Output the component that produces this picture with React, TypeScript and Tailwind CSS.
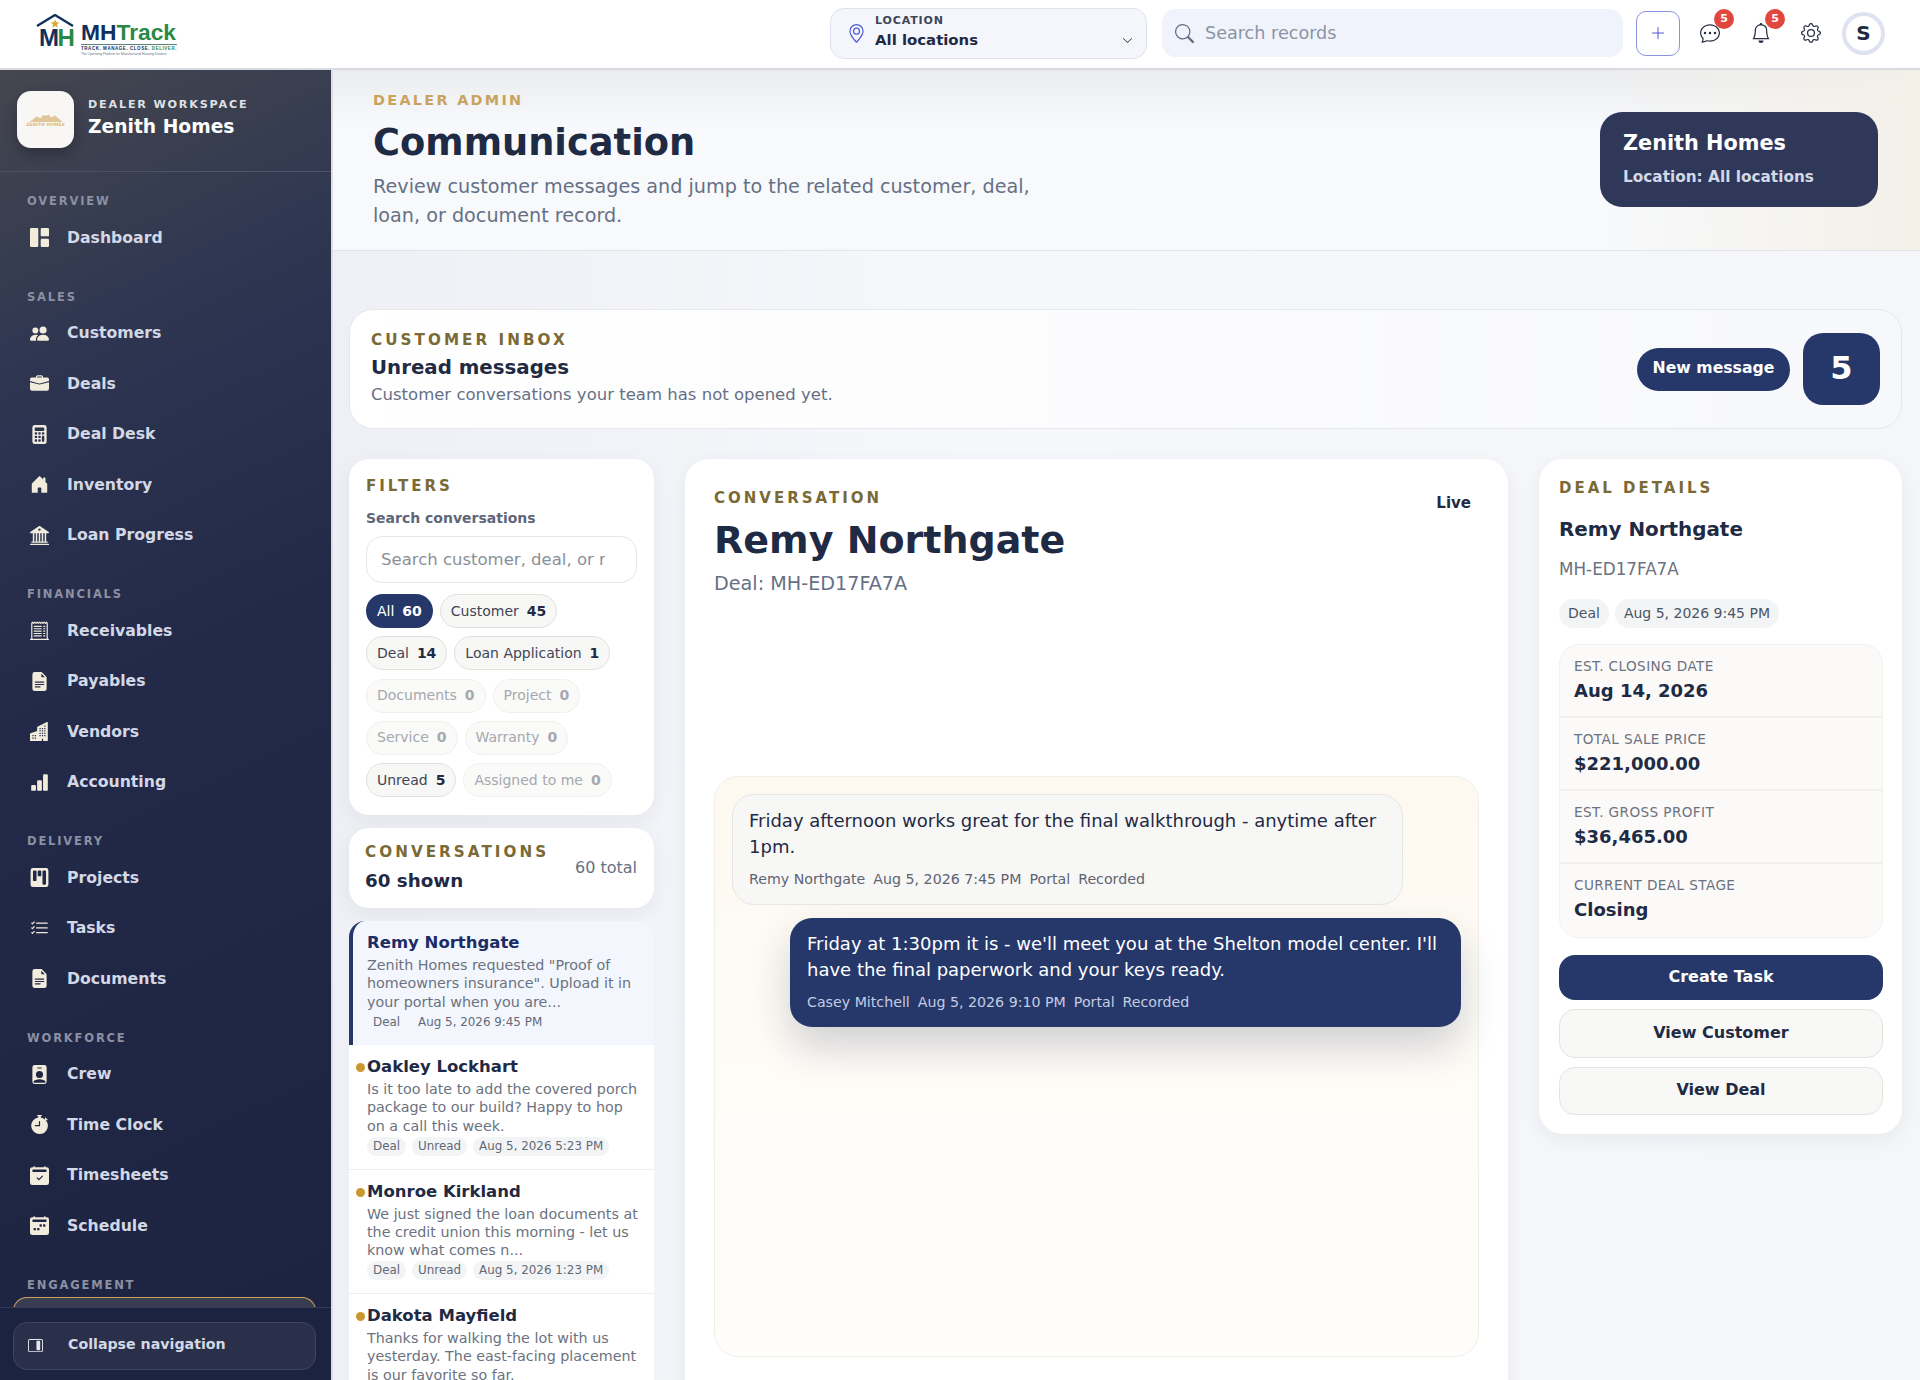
import React from "react";
import {
  BsBank2,
  BsBarChartFill,
  BsBell,
  BsBriefcaseFill,
  BsBuildingsFill,
  BsCalculatorFill,
  BsCalendar2CheckFill,
  BsCalendar2WeekFill,
  BsChatDots,
  BsChevronDown,
  BsFileEarmarkTextFill,
  BsGear,
  BsGeoAlt,
  BsGrid1X2Fill,
  BsHouseDoorFill,
  BsKanbanFill,
  BsLayoutSidebarInsetReverse,
  BsListCheck,
  BsPeopleFill,
  BsPersonBadgeFill,
  BsPlusLg,
  BsReceiptCutoff,
  BsSearch,
  BsStopwatchFill,
} from "react-icons/bs";

const navSections = [
  { title: "OVERVIEW", items: [{ label: "Dashboard", icon: BsGrid1X2Fill }] },
  {
    title: "SALES",
    items: [
      { label: "Customers", icon: BsPeopleFill },
      { label: "Deals", icon: BsBriefcaseFill },
      { label: "Deal Desk", icon: BsCalculatorFill },
      { label: "Inventory", icon: BsHouseDoorFill },
      { label: "Loan Progress", icon: BsBank2 },
    ],
  },
  {
    title: "FINANCIALS",
    items: [
      { label: "Receivables", icon: BsReceiptCutoff },
      { label: "Payables", icon: BsFileEarmarkTextFill },
      { label: "Vendors", icon: BsBuildingsFill },
      { label: "Accounting", icon: BsBarChartFill },
    ],
  },
  {
    title: "DELIVERY",
    items: [
      { label: "Projects", icon: BsKanbanFill },
      { label: "Tasks", icon: BsListCheck },
      { label: "Documents", icon: BsFileEarmarkTextFill },
    ],
  },
  {
    title: "WORKFORCE",
    items: [
      { label: "Crew", icon: BsPersonBadgeFill },
      { label: "Time Clock", icon: BsStopwatchFill },
      { label: "Timesheets", icon: BsCalendar2CheckFill },
      { label: "Schedule", icon: BsCalendar2WeekFill },
    ],
  },
];

const filterRows = [
  [
    { label: "All", count: 60, state: "active" },
    { label: "Customer", count: 45, state: "on" },
  ],
  [
    { label: "Deal", count: 14, state: "on" },
    { label: "Loan Application", count: 1, state: "on" },
  ],
  [
    { label: "Documents", count: 0, state: "off" },
    { label: "Project", count: 0, state: "off" },
  ],
  [
    { label: "Service", count: 0, state: "off" },
    { label: "Warranty", count: 0, state: "off" },
  ],
  [
    { label: "Unread", count: 5, state: "on" },
    { label: "Assigned to me", count: 0, state: "off" },
  ],
];

const threads = [
  {
    name: "Remy Northgate",
    text: 'Zenith Homes requested "Proof of homeowners insurance". Upload it in your portal when you are...',
    tags: ["Deal", "Aug 5, 2026 9:45 PM"],
    active: true,
  },
  {
    name: "Oakley Lockhart",
    text: "Is it too late to add the covered porch package to our build? Happy to hop on a call this week.",
    tags: ["Deal", "Unread", "Aug 5, 2026 5:23 PM"],
  },
  {
    name: "Monroe Kirkland",
    text: "We just signed the loan documents at the credit union this morning - let us know what comes n...",
    tags: ["Deal", "Unread", "Aug 5, 2026 1:23 PM"],
  },
  {
    name: "Dakota Mayfield",
    text: "Thanks for walking the lot with us yesterday. The east-facing placement is our favorite so far.",
    tags: ["Deal", "Unread", "Aug 5, 2026 9:23 AM"],
  },
];

const stats = [
  { label: "EST. CLOSING DATE", value: "Aug 14, 2026" },
  { label: "TOTAL SALE PRICE", value: "$221,000.00" },
  { label: "EST. GROSS PROFIT", value: "$36,465.00" },
  { label: "CURRENT DEAL STAGE", value: "Closing" },
];

const Logo = () => (
  <div className="flex items-start ml-[36px] mt-[14px]">
    <div className="relative w-[38px] h-[34px]">
      <svg viewBox="0 0 38 34" className="absolute inset-0 w-full h-full">
        <path d="M1 12 L19 1 L37 12" fill="none" stroke="#12305c" strokeWidth="2.4" />
        <path d="M19 5.5 l1.3 2.8 3 .3 -2.2 2 .6 3 -2.7-1.5 -2.7 1.5 .6-3 -2.2-2 3-.3z" fill="#d9a93a" />
      </svg>
      <span className="absolute left-[3px] top-[12px] font-['Liberation_Sans'] font-bold text-[24px] leading-[23px] text-[#12305c] tracking-[-1.5px]">
        M<span className="text-[#2a8a45]">H</span>
      </span>
    </div>
    <div className="ml-[7px] mt-[7px] w-[96px]">
      <div className="font-['Liberation_Sans'] font-bold text-[22.8px] leading-[22px] text-[#12305c] whitespace-nowrap">
        MH<span className="text-[#2a8a45]">Track</span>
      </div>
      <div className="h-px bg-[#5d7f7a] mt-[1px]" />
      <div className="font-['Liberation_Sans'] font-bold text-[4.5px] leading-[7px] text-[#12305c] tracking-[0.55px] whitespace-nowrap">
        TRACK. MANAGE. CLOSE. <span className="text-[#2a8a45]">DELIVER.</span>
      </div>
      <div className="font-['Liberation_Sans'] text-[3.3px] leading-[4px] text-[#667085] whitespace-nowrap">
        The Operating Platform for Manufactured Housing Dealers
      </div>
    </div>
  </div>
);

const TopBar = () => (
  <header className="h-[70px] shrink-0 bg-white border-b-2 border-[#d9dbe0] flex items-center">
    <div className="w-[332px] h-full shrink-0">
      <Logo />
    </div>
    <div className="flex items-center ml-[498px] mb-[2px]">
      <div className="w-[317px] h-[51px] rounded-[14px] bg-[#f4f6fc] border border-[#dfe2ee] flex items-center pl-[16px] pr-[13px]">
        <BsGeoAlt className="text-[#4f5bd5] text-[19px]" />
        <div className="ml-[9px] flex-1 mb-[3px]">
          <div className="text-[11px] leading-[14px] font-semibold tracking-[0.08em] text-[#3d4558]">LOCATION</div>
          <div className="text-[14.9px] leading-[20px] font-bold text-[#1f2a44] mt-[2px]">All locations</div>
        </div>
        <BsChevronDown className="text-[#1f2a44] text-[11px] mt-[14px]" />
      </div>
      <div className="ml-[15px] w-[461px] h-[48px] rounded-[14px] bg-[#f0f3fb] flex items-center pl-[13px]">
        <BsSearch className="text-[#667085] text-[19px]" />
        <span className="ml-[11px] text-[17.6px] text-[#8b93a3]">Search records</span>
      </div>
      <div className="ml-[13px] w-[44px] h-[45px] rounded-[10px] border border-[#8d92dc] flex items-center justify-center">
        <BsPlusLg className="text-[#4f5bd5] text-[16px]" />
      </div>
      <div className="relative ml-[14px] w-[32px] h-[32px] flex items-center justify-center">
        <BsChatDots className="text-[#2a3146] text-[20px]" />
        <span className="absolute -top-[8px] right-[-8px] w-[20px] h-[20px] rounded-full bg-[#e0483e] text-white text-[11px] font-bold flex items-center justify-center">5</span>
      </div>
      <div className="relative ml-[19px] w-[32px] h-[32px] flex items-center justify-center">
        <BsBell className="text-[#2a3146] text-[20px]" />
        <span className="absolute -top-[8px] right-[-8px] w-[20px] h-[20px] rounded-full bg-[#e0483e] text-white text-[11px] font-bold flex items-center justify-center">5</span>
      </div>
      <div className="ml-[18px] w-[32px] h-[32px] flex items-center justify-center">
        <BsGear className="text-[#2a3146] text-[20px]" />
      </div>
      <div className="ml-[15px] w-[43px] h-[43px] rounded-full border-[4px] border-[#dfe2f0] bg-white flex items-center justify-center text-[20px] font-bold text-[#1f2a44]">
        S
      </div>
    </div>
  </header>
);

const Sidebar = () => (
  <aside className="relative w-[333px] shrink-0 border-r-2 border-[#dcdee4] bg-[linear-gradient(155deg,#45474f_0%,#2d3551_22%,#232a49_45%,#1c2340_100%)] overflow-hidden flex flex-col">
    <div className="h-[102px] shrink-0 border-b border-[#4d5268] flex items-center pl-[17px] pb-[2px]">
      <div className="w-[57px] h-[57px] rounded-[14px] bg-[#f8f7f5] shadow-[0_6px_14px_rgba(0,0,0,0.25)] flex flex-col items-center justify-center">
        <svg viewBox="0 0 36 12" className="w-[36px] h-[11px]">
          <path d="M0 12 L8 6 L12 8 L18 1 L24 7 L28 5 L36 12 Z" fill="#e0c79a" />
          <path d="M18 1 L21 4 L18 5 L15 4 Z" fill="#ffffff" />
        </svg>
        <span className="text-[4.5px] leading-[6px] font-bold text-[#dcb87c] whitespace-nowrap">ZENITH HOMES</span>
      </div>
      <div className="ml-[14px] mb-[4px]">
        <div className="text-[11.2px] leading-[16px] font-bold tracking-[0.16em] text-[#dfe1e6]">DEALER WORKSPACE</div>
        <div className="text-[18.7px] leading-[24px] font-bold text-white mt-[2px]">Zenith Homes</div>
      </div>
    </div>
    <nav className="flex-1 pt-[21px] overflow-hidden">
      {navSections.map((section) => (
        <div key={section.title} className="mb-[25.5px]">
          <div className="pl-[27px] text-[11.5px] leading-[16px] font-bold tracking-[0.16em] text-[#8b90a3] mb-[3.5px]">
            {section.title}
          </div>
          {section.items.map((item) => (
            <div key={item.label} className="flex items-center h-[50.5px] pl-[30px]">
              <item.icon className="text-[#f1ecdc] text-[19px] shrink-0" />
              <span className="ml-[18px] text-[15.7px] font-bold text-[#d3d8e6]">{item.label}</span>
            </div>
          ))}
        </div>
      ))}
      <div className="pl-[27px] text-[11.5px] leading-[16px] font-bold tracking-[0.16em] text-[#8b90a3]">ENGAGEMENT</div>
      <div className="ml-[13px] mr-[15px] mt-[4px] h-[40px] rounded-t-[14px] border-t border-x border-[#c9a35e] bg-[#3a3d52]" />
    </nav>
    <div className="absolute left-0 right-0 bottom-0 h-[73px] bg-[#1c2340] border-t border-[#343a55] pt-[14px] pl-[13px] pr-[15px]">
      <div className="h-[48px] rounded-[14px] border border-[#3f4560] bg-[#2a3049] flex items-center pl-[14px] pb-[2px]">
        <BsLayoutSidebarInsetReverse className="text-[#e4e6ee] text-[15px]" />
        <span className="ml-[25px] text-[14.2px] font-bold text-[#d3d8e6]">Collapse navigation</span>
      </div>
    </div>
  </aside>
);

const Eyebrow = ({ children, className }: { children: React.ReactNode; className: string }) => (
  <div className={`font-bold text-[#7a6a36] ${className}`}>{children}</div>
);

const FiltersCard = () => (
  <section className="h-[356px] rounded-[20px] bg-white shadow-[0_6px_20px_rgba(31,42,68,0.06)] pt-[17px] px-[17px]">
    <Eyebrow className="text-[15px] leading-[20px] tracking-[0.2em]">FILTERS</Eyebrow>
    <div className="mt-[13px] text-[14px] leading-[18px] font-bold text-[#5f6678]">Search conversations</div>
    <div className="mt-[9px] h-[47px] w-[271px] rounded-[16px] border border-[#e5e7eb] flex items-center pl-[14px] pt-[1px] text-[16.5px] text-[#8b8f98]">
      <span className="w-[224px] overflow-hidden whitespace-nowrap">Search customer, deal, or record</span>
    </div>
    <div className="mt-[11px] flex flex-col gap-[8.3px]">
      {filterRows.map((row, i) => (
        <div key={i} className="flex gap-[7px]">
          {row.map((chip) => (
            <div
              key={chip.label}
              className={
                chip.state === "active"
                  ? "h-[34px] px-[11px] rounded-full bg-[#26386a] text-white flex items-center gap-[8px] text-[14px]"
                  : chip.state === "on"
                    ? "h-[34px] px-[10px] rounded-full border border-[#e1e1de] bg-[#f7f7f5] text-[#3f4657] flex items-center gap-[8px] text-[14px]"
                    : "h-[34px] px-[10px] rounded-full border border-[#f0f0ee] bg-[#fafaf9] text-[#a5a8ae] flex items-center gap-[8px] text-[14px]"
              }
            >
              <span>{chip.label}</span>
              <b
                className={
                  chip.state === "active"
                    ? "text-white"
                    : chip.state === "on"
                      ? "text-[#1f2a44]"
                      : "text-[#a5a8ae]"
                }
              >
                {chip.count}
              </b>
            </div>
          ))}
        </div>
      ))}
    </div>
  </section>
);

const ThreadList = () => (
  <section className="bg-white rounded-t-[20px]">
    {threads.map((t) => (
      <div
        key={t.name}
        className={
          t.active
            ? "relative h-[124px] bg-[#f3f6fd] border-l-[4px] border-[#26386a] rounded-tl-[16px] rounded-tr-[20px] pl-[14px] pr-[14px] pt-[11px]"
            : "relative h-[124.5px] border-b border-[#eceef2] pl-[18px] pr-[14px] pt-[11px]"
        }
      >
        {!t.active && <span className="absolute left-[7px] top-[18px] w-[9px] h-[9px] rounded-full bg-[#c9982f]" />}
        <div className={t.active ? "text-[16.5px] leading-[22px] font-bold text-[#1c2d66]" : "text-[16.5px] leading-[22px] font-bold text-[#1f2a44]"}>
          {t.name}
        </div>
        <p className="mt-[2px] text-[14.3px] leading-[18.3px] text-[#6b7280]">{t.text}</p>
        <div className="mt-[2px] flex gap-[6px]">
          {t.tags.map((tag) => (
            <span
              key={tag}
              className={
                t.active
                  ? "h-[19px] px-[6px] rounded-full text-[11.9px] leading-[19px] text-[#626978]"
                  : "h-[19px] px-[6px] rounded-full bg-[#f3f4f6] text-[11.9px] leading-[19px] text-[#626978]"
              }
            >
              {tag}
            </span>
          ))}
        </div>
      </div>
    ))}
  </section>
);

const Bubble = ({ mine, text, meta }: { mine?: boolean; text: string; meta: string[] }) => (
  <div
    className={
      mine
        ? "w-[671px] self-end rounded-[22px] bg-[#26386a] text-white pt-[13px] pl-[17px] pr-[17px] h-[109px] shadow-[0_20px_40px_rgba(31,42,68,0.2)]"
        : "w-[671px] rounded-[22px] bg-[#f7f7f6] border border-[#e6e6e3] text-[#1f2a44] pt-[13px] pl-[16px] pr-[17px] h-[111px]"
    }
  >
    <p className="text-[18px] leading-[26.4px]">{text}</p>
    <div className={mine ? "mt-[9.5px] flex gap-[8px] text-[14.2px] leading-[18px] text-[#c3cce2]" : "mt-[9.5px] flex gap-[8px] text-[14.2px] leading-[18px] text-[#5f6472]"}>
      {meta.map((m) => (
        <span key={m}>{m}</span>
      ))}
    </div>
  </div>
);

const ConversationCard = () => (
  <section className="h-[950px] rounded-t-[24px] bg-white shadow-[0_6px_20px_rgba(31,42,68,0.06)] pt-[29px] px-[29px]">
    <div className="flex justify-between">
      <div>
        <Eyebrow className="text-[15px] leading-[20px] tracking-[0.2em]">CONVERSATION</Eyebrow>
        <h2 className="mt-[10px] text-[38px] leading-[45px] font-bold text-[#1f2a44]">Remy Northgate</h2>
        <div className="mt-[8px] text-[19.2px] leading-[26px] text-[#667085]">Deal: MH-ED17FA7A</div>
      </div>
      <div className="text-[15px] font-bold text-[#1f2a44] mt-[4px] mr-[8px]">Live</div>
    </div>
    <div className="mt-[179px] h-[581px] rounded-[24px] border border-[#f0efea] bg-[linear-gradient(180deg,#fdf9f0_0%,#fffdfa_70%)] p-[17px] flex flex-col gap-[13px]">
      <Bubble
        text="Friday afternoon works great for the final walkthrough - anytime after 1pm."
        meta={["Remy Northgate", "Aug 5, 2026 7:45 PM", "Portal", "Recorded"]}
      />
      <Bubble
        mine
        text="Friday at 1:30pm it is - we'll meet you at the Shelton model center. I'll have the final paperwork and your keys ready."
        meta={["Casey Mitchell", "Aug 5, 2026 9:10 PM", "Portal", "Recorded"]}
      />
    </div>
  </section>
);

const DealCard = () => (
  <section className="h-[675px] rounded-[24px] bg-white shadow-[0_6px_20px_rgba(31,42,68,0.06)] pt-[19px] pl-[20px] pr-[19px]">
    <Eyebrow className="text-[15px] leading-[20px] tracking-[0.2em]">DEAL DETAILS</Eyebrow>
    <div className="mt-[18px] text-[19.9px] leading-[28px] font-bold text-[#1f2a44]">Remy Northgate</div>
    <div className="mt-[13px] text-[16.8px] leading-[24px] text-[#6b7280]">MH-ED17FA7A</div>
    <div className="mt-[18px] flex gap-[6px]">
      <span className="h-[29px] px-[9px] rounded-full bg-[#f3f4f6] text-[14px] leading-[29px] text-[#4b5563]">Deal</span>
      <span className="h-[29px] px-[9px] rounded-full bg-[#f3f4f6] text-[14px] leading-[29px] text-[#4b5563]">Aug 5, 2026 9:45 PM</span>
    </div>
    <div className="mt-[16px] rounded-[20px] border border-[#f2f1ee] bg-[#fbfaf9] overflow-hidden">
      {stats.map((s, i) => (
        <div key={s.label} className={i < 3 ? "h-[73px] border-b-2 border-[#f1f0ed] pl-[14px] pt-[12px]" : "h-[73px] pl-[14px] pt-[12px]"}>
          <div className="text-[13.6px] leading-[18px] tracking-[0.03em] text-[#6b7280]">{s.label}</div>
          <div className="mt-[4px] text-[18px] leading-[24px] font-bold text-[#1f2a44]">{s.value}</div>
        </div>
      ))}
    </div>
    <div className="mt-[17px] flex flex-col gap-[9px]">
      <div className="h-[45px] rounded-[16px] bg-[#26386a] text-white text-[16px] font-bold flex items-center justify-center pb-[2px]">Create Task</div>
      <div className="h-[49px] rounded-[16px] border border-[#e4e4e1] bg-[#f8f8f6] text-[#1f2a44] text-[16px] font-bold flex items-center justify-center pb-[2px]">View Customer</div>
      <div className="h-[48px] rounded-[16px] border border-[#e4e4e1] bg-[#f8f8f6] text-[#1f2a44] text-[16px] font-bold flex items-center justify-center pb-[2px]">View Deal</div>
    </div>
  </section>
);

const Main = () => (
  <main className="flex-1 min-w-0 bg-[linear-gradient(90deg,#eef0f5_0%,#f5f7fb_40%,#f4f6f9_100%)] overflow-hidden">
    <div className="h-[181px] border-b border-[#e1e4ea] bg-[linear-gradient(90deg,rgba(239,236,227,0)_80%,#f3f0e8_100%),linear-gradient(180deg,#ebecee_0%,#f7f9fc_30%,#f8f9fb_100%)] pl-[40px] pr-[42px] flex justify-between">
      <div className="pt-[20px]">
        <div className="text-[14.4px] leading-[20px] font-bold tracking-[0.16em] text-[#c9a35e]">DEALER ADMIN</div>
        <h1 className="mt-[11px] text-[36.8px] leading-[44px] font-bold text-[#1f2a44]">Communication</h1>
        <p className="mt-[8px] w-[690px] text-[19.2px] leading-[28.8px] text-[#667085]">
          Review customer messages and jump to the related customer, deal, loan, or document record.
        </p>
      </div>
      <div className="mt-[42px] w-[278px] h-[95px] rounded-[22px] bg-[#30385a] pl-[23px] pt-[17px]">
        <div className="text-[20.8px] leading-[28px] font-bold text-white">Zenith Homes</div>
        <div className="mt-[10px] text-[15.3px] leading-[20px] font-bold text-[#d3d8e6]">Location: All locations</div>
      </div>
    </div>
    <div className="pl-[16px] pr-[18px] pt-[58px]">
      <section className="h-[120px] rounded-[24px] border border-[#e6e8ee] bg-[linear-gradient(90deg,#ffffff_0%,#f7f8fb_100%)] pl-[21px] pr-[21px] flex items-center justify-between">
        <div className="mb-[1px]">
          <Eyebrow className="text-[15.2px] leading-[20px] tracking-[0.2em]">CUSTOMER INBOX</Eyebrow>
          <div className="mt-[4px] text-[19.8px] leading-[28px] font-bold text-[#1f2a44]">Unread messages</div>
          <div className="mt-[1px] text-[16.5px] leading-[24px] text-[#667085]">Customer conversations your team has not opened yet.</div>
        </div>
        <div className="flex items-center gap-[13px]">
          <div className="h-[43px] w-[153px] rounded-full bg-[#26386a] text-white text-[15.7px] font-bold flex items-center justify-center pb-[2px]">New message</div>
          <div className="h-[72px] w-[77px] rounded-[20px] bg-[#26386a] text-white text-[32px] font-bold flex items-center justify-center pb-[2px]">5</div>
        </div>
      </section>
      <div className="mt-[30px] flex gap-[31px] items-start">
        <div className="w-[305px] shrink-0 flex flex-col gap-[13px]">
          <FiltersCard />
          <section className="h-[80px] rounded-[20px] bg-white shadow-[0_6px_20px_rgba(31,42,68,0.06)] pl-[16px] pr-[17px] pt-[13px] flex justify-between">
            <div>
              <Eyebrow className="text-[15.2px] leading-[22px] tracking-[0.2em]">CONVERSATIONS</Eyebrow>
              <div className="mt-[5px] text-[18.3px] leading-[26px] font-bold text-[#1f2a44]">60 shown</div>
            </div>
            <div className="mt-[15px] text-[16px] leading-[24px] text-[#667085]">60 total</div>
          </section>
          <ThreadList />
        </div>
        <div className="w-[823px] shrink-0">
          <ConversationCard />
        </div>
        <div className="w-[363px] shrink-0">
          <DealCard />
        </div>
      </div>
    </div>
  </main>
);

export default function App() {
  return (
    <div className="w-[1920px] h-[1380px] overflow-hidden flex flex-col font-['DejaVu_Sans',sans-serif] bg-white">
      <TopBar />
      <div className="flex-1 min-h-0 flex">
        <Sidebar />
        <Main />
      </div>
    </div>
  );
}
